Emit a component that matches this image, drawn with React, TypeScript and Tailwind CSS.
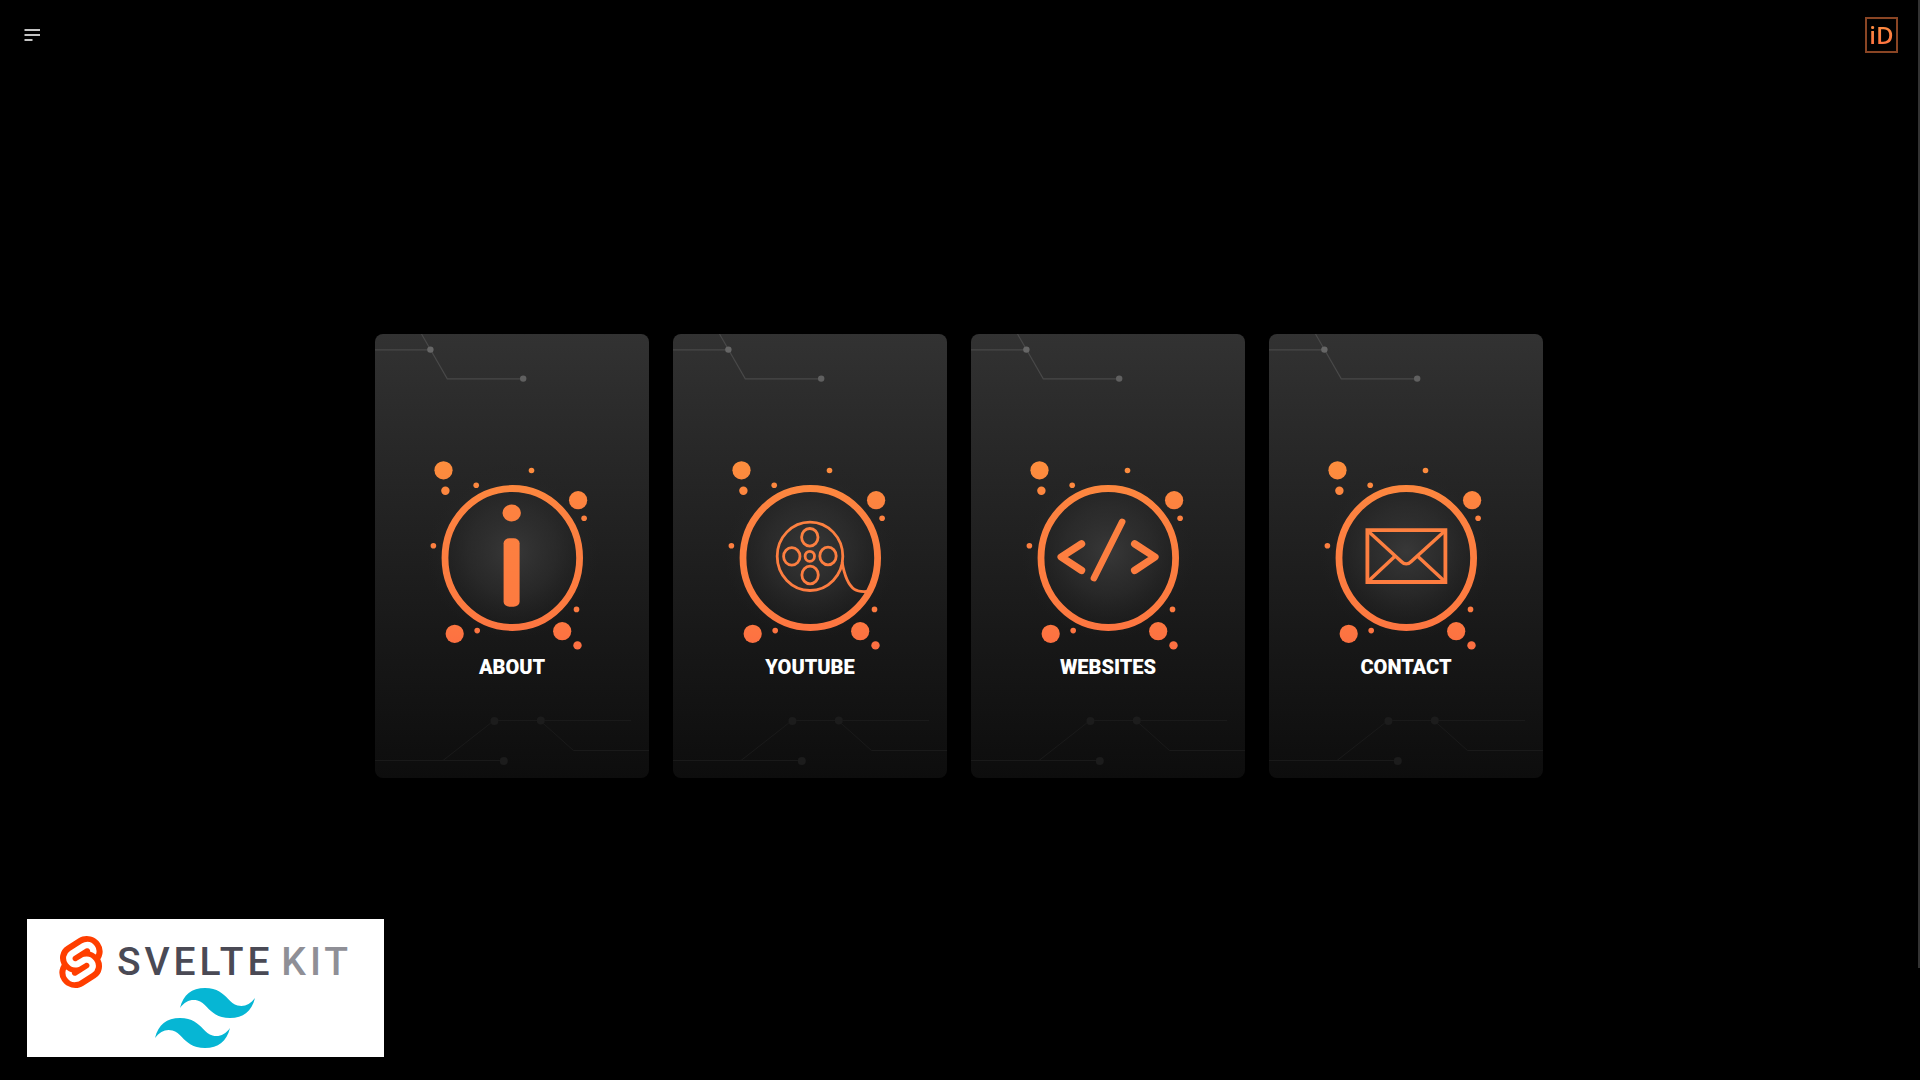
import React from "react";
import { SiSvelte } from "react-icons/si";

const ORANGE = "url(#emberGradient)";

function SharedGradients() {
  return (
    <svg className="absolute h-0 w-0" aria-hidden="true">
      <defs>
        <linearGradient id="emberGradient" gradientUnits="userSpaceOnUse" x1="0" y1="127" x2="0" y2="317">
          <stop offset="0" stopColor="#fd8e3d" />
          <stop offset="0.25" stopColor="#fd8240" />
          <stop offset="0.8" stopColor="#fd7a40" />
          <stop offset="1" stopColor="#fd6e42" />
        </linearGradient>
        <radialGradient id="glow">
          <stop offset="0" stopColor="#383838" />
          <stop offset="0.5" stopColor="#303030" stopOpacity="0.6" />
          <stop offset="1" stopColor="#222222" stopOpacity="0" />
        </radialGradient>
      </defs>
    </svg>
  );
}

function InfoIcon() {
  return (
    <g fill={ORANGE}>
      <ellipse cx="136.2" cy="179" rx="9.2" ry="8.4" />
      <rect x="128.1" y="204.3" width="16" height="68.4" rx="6" ry="5" />
    </g>
  );
}

function ReelIcon() {
  return (
    <g fill="none" stroke={ORANGE} strokeWidth="2.8">
      <ellipse cx="136.5" cy="222.3" rx="32.8" ry="34.2" />
      <ellipse cx="136.3" cy="203.3" rx="8.2" ry="8.8" />
      <ellipse cx="118.3" cy="222.4" rx="8.2" ry="8.8" />
      <ellipse cx="154.5" cy="222" rx="8.2" ry="8.8" />
      <ellipse cx="136.6" cy="241" rx="8.2" ry="8.8" />
      <ellipse cx="136.3" cy="222.3" rx="4.7" ry="5" />
      <path d="M168.6 228c2.2 13 6.6 23.4 12.4 27.4c3.6 2.4 7.4 2.5 12.5 2.1" />
    </g>
  );
}

function CodeIcon() {
  return (
    <g fill="none" stroke={ORANGE} strokeWidth="7.4" strokeLinecap="round" strokeLinejoin="round">
      <path d="M110 209.8L89.7 223L110 236.4" />
      <path d="M163.2 209.8L183.4 223L163.2 236.4" />
      <path d="M150.7 187.8L122.4 244.2" strokeWidth="6.5" />
    </g>
  );
}

function MailIcon() {
  return (
    <g fill="none" stroke={ORANGE} strokeWidth="3.4">
      <path d="M97.9 196.2H175.9V248H97.9Z" strokeWidth="3.8" />
      <path d="M98.5 197L131.5 227.2Q136.7 232.6 142 227.2L175.3 197" />
      <path d="M125.2 222.6L98.5 247.4M148.4 222.6L175.3 247.4" />
    </g>
  );
}

const bubbles = [
  [68, 136.3, 9.1],
  [69.9, 156.8, 4.2],
  [100.7, 151.3, 2.8],
  [156, 136.5, 2.8],
  [202.6, 166.2, 9.1],
  [208.6, 184.2, 2.8],
  [57.9, 211.7, 2.8],
  [79.2, 299.8, 9.1],
  [101.7, 296.6, 2.8],
  [201, 275.4, 2.8],
  [186.7, 297.2, 9.1],
  [202, 311.4, 4.2],
];

function Card({ label, href, icon }: { label: string; href: string; icon: React.ReactNode }) {
  return (
    <a
      href={href}
      className="flex flex-col overflow-hidden rounded-lg bg-linear-to-b from-[#323232] to-[#0d0d0d] text-white"
    >
      <svg viewBox="0 0 274 317" className="w-full" aria-hidden="true">
        <g fill="none" stroke="#484848" strokeWidth="1.2">
          <path d="M0 15.8H55" />
          <path d="M46.5 0L72.3 44.8H148" />
        </g>
        <circle cx="55.4" cy="15.6" r="3.2" fill="#666666" />
        <circle cx="148.2" cy="44.6" r="3.2" fill="#606060" />
        <g transform="translate(0.5 0)">
          <circle cx="136.8" cy="217" r="88" fill="url(#glow)" />
          <ellipse cx="136.8" cy="224" rx="67.3" ry="69.5" fill="none" stroke={ORANGE} strokeWidth="6.8" />
          {bubbles.map(([x, y, r]) => (
            <circle key={`${x}-${y}`} cx={x} cy={y} r={r} fill={ORANGE} />
          ))}
          {icon}
        </g>
      </svg>
      <span className="text-center font-['Roboto',sans-serif] text-xl leading-8 font-black uppercase">{label}</span>
      <svg viewBox="0 349 274 95" className="w-full" aria-hidden="true">
        <g fill="none" stroke="#1a1a1a" strokeWidth="1">
          <path d="M0 426.5H128" />
          <path d="M68 426.5L119 386.5H256" />
          <path d="M165 386.5L198.5 416.5H274" />
        </g>
        <g fill="#1c1c1c">
          <circle cx="119.4" cy="387" r="4" />
          <circle cx="165.8" cy="386.5" r="4" />
          <circle cx="128.8" cy="427" r="4" />
        </g>
      </svg>
    </a>
  );
}

export default function App() {
  return (
    <div className="relative flex min-h-screen flex-col bg-black pr-0.5">
      <SharedGradients />
      <header className="flex h-[70px] items-center justify-between pr-5 pl-6">
        <button type="button" aria-label="Open menu">
          <svg width="16" height="14" viewBox="0 0 16 14" className="block" aria-hidden="true">
            <path d="M0.5 2H16M0.5 7H16M0.5 12H8.5" stroke="#c4c4c4" strokeWidth="2" />
          </svg>
        </button>
        <a
          href="#home"
          className="flex h-9 w-[33px] items-center justify-center border-2 border-[#8a4524] font-['Open_Sans',sans-serif] text-2xl leading-8 font-semibold"
        >
          <span className="bg-linear-to-b from-[#ff9440] to-[#ff6a40] bg-clip-text text-transparent">iD</span>
        </a>
      </header>

      <main className="flex flex-1 items-center justify-center px-6 pb-[38px]">
        <nav className="grid w-full max-w-[1168px] grid-cols-2 gap-6 lg:grid-cols-4">
          <Card label="About" href="#about" icon={<InfoIcon />} />
          <Card label="YouTube" href="#youtube" icon={<ReelIcon />} />
          <Card label="Websites" href="#websites" icon={<CodeIcon />} />
          <Card label="Contact" href="#contact" icon={<MailIcon />} />
        </nav>
      </main>

      <aside className="fixed bottom-[23px] left-[27px] flex flex-col items-center bg-white px-8 pt-[17px] pb-[9px]">
        <div className="flex items-center gap-3.5 font-['Roboto',sans-serif] text-[39px] leading-[52px] font-medium">
          <SiSvelte size={52} color="#ff3e00" className="-mx-1" aria-hidden="true" />
          <div className="flex gap-2 tracking-widest">
            <span className="text-[#4a4a55]">SVELTE</span>
            <span className="text-[#8f8f96]">KIT</span>
          </div>
        </div>
        <svg viewBox="0 4.8 24 14.4" className="w-[100px]" fill="#06b6d4" aria-hidden="true">
          <path d="M12.001,4.8c-3.2,0-5.2,1.6-6,4.8c1.2-1.6,2.6-2.2,4.2-1.8c0.913,0.228,1.565,0.89,2.288,1.624C13.666,10.618,15.027,12,18.001,12c3.2,0,5.2-1.6,6-4.8c-1.2,1.6-2.6,2.2-4.2,1.8c-0.913-0.228-1.565-0.89-2.288-1.624C16.337,6.182,14.976,4.8,12.001,4.8z M6.001,12c-3.2,0-5.2,1.6-6,4.8c1.2-1.6,2.6-2.2,4.2-1.8c0.913,0.228,1.565,0.89,2.288,1.624c1.177,1.194,2.538,2.576,5.512,2.576c3.2,0,5.2-1.6,6-4.8c-1.2,1.6-2.6,2.2-4.2,1.8c-0.913-0.228-1.565-0.89-2.288-1.624C10.337,13.382,8.976,12,6.001,12z" />
        </svg>
      </aside>

      <div className="fixed top-0 right-0 h-[968px] w-0.5 bg-[#333333]" />
    </div>
  );
}
